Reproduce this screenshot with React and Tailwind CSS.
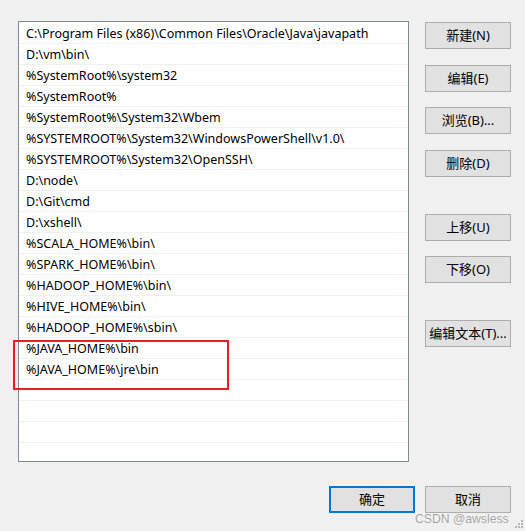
const PATHS = [
  'C:\\Program Files (x86)\\Common Files\\Oracle\\Java\\javapath',
  'D:\\vm\\bin\\',
  '%SystemRoot%\\system32',
  '%SystemRoot%',
  '%SystemRoot%\\System32\\Wbem',
  '%SYSTEMROOT%\\System32\\WindowsPowerShell\\v1.0\\',
  '%SYSTEMROOT%\\System32\\OpenSSH\\',
  'D:\\node\\',
  'D:\\Git\\cmd',
  'D:\\xshell\\',
  '%SCALA_HOME%\\bin\\',
  '%SPARK_HOME%\\bin\\',
  '%HADOOP_HOME%\\bin\\',
  '%HIVE_HOME%\\bin\\',
  '%HADOOP_HOME%\\sbin\\',
  '%JAVA_HOME%\\bin',
  '%JAVA_HOME%\\jre\\bin',
]

const rows = [...PATHS, ...Array(5).fill('')]

function Btn({ children, className = '' }) {
  return (
    <button className={`w-[86px] h-[27px] bg-[#e1e1e1] border border-[#adadad] text-[13px] text-black leading-none ${className}`}>
      {children}
    </button>
  )
}

export default function App() {
  return (
    <div
      className="relative w-[525px] h-[531px] bg-[#f0f0f0] overflow-hidden"
      style={{ fontFamily: '"Noto Sans", "Noto Sans CJK SC", sans-serif' }}
    >
      <div className="flex pt-[21px] pl-[18px]">
        {/* path list */}
        <div className="w-[391px] h-[441px] bg-white border border-[#828790] pt-px overflow-hidden">
          {rows.map((p, i) => (
            <div key={i} className="h-[21px] border-b border-[#f0f0f0] pl-[7px] pt-px text-[12.5px] leading-[20px] text-black whitespace-nowrap">
              {p}
            </div>
          ))}
        </div>

        {/* side buttons */}
        <div className="flex flex-col ml-[16px] pt-px">
          <Btn>新建(N)</Btn>
          <Btn className="mt-[16px]">编辑(E)</Btn>
          <Btn className="mt-[15px]">浏览(B)...</Btn>
          <Btn className="mt-[16px]">删除(D)</Btn>
          <Btn className="mt-[37px]">上移(U)</Btn>
          <Btn className="mt-[15px]">下移(O)</Btn>
          <Btn className="mt-[37px]">编辑文本(T)...</Btn>
        </div>
      </div>

      <div className="flex justify-end gap-[10px] pr-[14px] mt-[24px]">
        <Btn className="!border-2 !border-[#0078d7]">确定</Btn>
        <Btn>取消</Btn>
      </div>

      {/* red highlight */}
      <div className="absolute left-[13px] top-[340px] w-[216px] h-[50px] border-2 border-[#ec1c24]" />

      {/* watermark */}
      <div
        className="absolute left-[415px] top-[510px] text-[12.2px] text-[#a3a3a3] whitespace-nowrap"
        style={{ fontFamily: '"Liberation Sans", Arial, sans-serif', textShadow: '0 0 1px #fff, 0 0 1px #fff' }}
      >
        CSDN @awsless
      </div>

      {/* resize grip */}
      <svg className="absolute right-[2px] bottom-[3px]" width="8" height="8" viewBox="0 0 8 8">
        <rect x="6" y="0" width="2" height="2" fill="#b8b8b8" />
        <rect x="3" y="3" width="2" height="2" fill="#b8b8b8" />
        <rect x="6" y="3" width="2" height="2" fill="#b8b8b8" />
        <rect x="0" y="6" width="2" height="2" fill="#b8b8b8" />
        <rect x="3" y="6" width="2" height="2" fill="#b8b8b8" />
        <rect x="6" y="6" width="2" height="2" fill="#b8b8b8" />
      </svg>
    </div>
  )
}
